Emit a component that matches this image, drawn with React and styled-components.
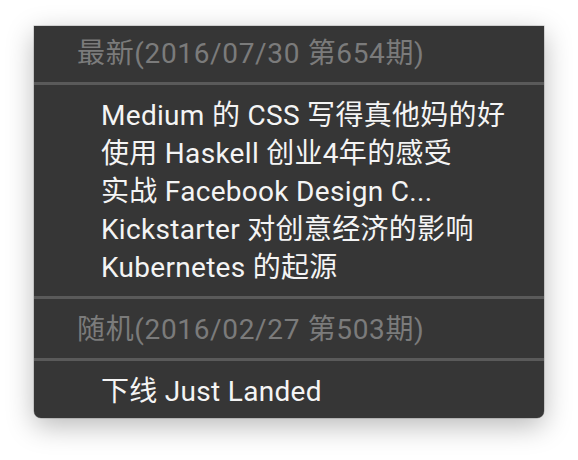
import React from "react";
import styled, { createGlobalStyle } from "styled-components";

const Global = createGlobalStyle`
  html, body { margin: 0; padding: 0; background: #ffffff; }
  body { font-family: "Roboto", "Noto Sans CJK SC", sans-serif; }
`;

const Page = styled.div`
  width: 578px;
  height: 460px;
  padding: 26px 0 0 34px;
  box-sizing: border-box;
`;

const Menu = styled.div`
  width: 510px;
  background: #363636;
  border-radius: 0 0 7px 7px;
  box-shadow: 0 8px 28px rgba(0, 0, 0, 0.28), 0 0 0 0.5px rgba(0, 0, 0, 0.25);
  display: flex;
  flex-direction: column;
`;

const Header = styled.div`
  height: ${(p) => p.$h}px;
  padding-left: 43px;
  padding-bottom: ${(p) => p.$pb || 0}px;
  box-sizing: border-box;
  display: flex;
  align-items: center;
  color: #7b7b7b;
  font-size: 28px;
  letter-spacing: 0.65px;
  white-space: nowrap;
`;

const Separator = styled.div`
  height: 3px;
  background: #5a5a5a;
`;

const Group = styled.div`
  display: flex;
  flex-direction: column;
  padding: 10px 0 ${(p) => p.$pb}px;
`;

const Item = styled.div`
  height: 38px;
  padding-left: 67px;
  padding-bottom: 3px;
  box-sizing: border-box;
  display: flex;
  align-items: center;
  color: #f4f4f4;
  font-size: 28px;
  letter-spacing: 0.3px;
  white-space: nowrap;
`;

const latest = [
  "Medium 的 CSS 写得真他妈的好",
  "使用 Haskell 创业4年的感受",
  "实战 Facebook Design C...",
  "Kickstarter 对创意经济的影响",
  "Kubernetes 的起源",
];

export default function App() {
  return (
    <>
      <Global />
      <Page>
        <Menu>
          <Header $h={56} $pb={6}>最新(2016/07/30 第654期)</Header>
          <Separator />
          <Group $pb={11}>
            {latest.map((t) => (
              <Item key={t}>{t}</Item>
            ))}
          </Group>
          <Separator />
          <Header $h={59} $pb={3}>随机(2016/02/27 第503期)</Header>
          <Separator />
          <Group $pb={9}>
            <Item>下线 Just Landed</Item>
          </Group>
        </Menu>
      </Page>
    </>
  );
}
